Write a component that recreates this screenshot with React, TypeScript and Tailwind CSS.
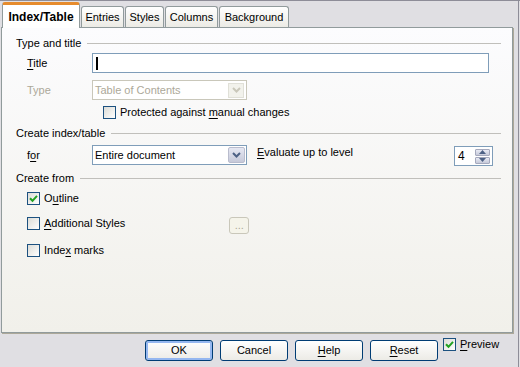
import React from 'react';

function U({ children }: { children: React.ReactNode }) {
  return <span className="underline underline-offset-2">{children}</span>;
}

function Check({ checked = false }: { checked?: boolean }) {
  return (
    <span className="w-[13px] h-[13px] shrink-0 border border-[#1c5180] bg-linear-to-br from-[#dcdcd7] to-white flex items-center justify-center">
      {checked && (
        <svg width="9" height="9" viewBox="0 0 9 9">
          <path d="M1 4.2 L3.5 6.8 L8 1.8" fill="none" stroke="#21a121" strokeWidth="2" />
        </svg>
      )}
    </span>
  );
}

function Legend({ label }: { label: string }) {
  return (
    <div className="flex items-center h-[14px] gap-[6px]">
      <span className="whitespace-nowrap">{label}</span>
      <div className="flex-1 h-px bg-[#c0bfbb] mr-[11px]" />
    </div>
  );
}

function Chevron({ color }: { color: string }) {
  return (
    <svg width="9" height="6" viewBox="0 0 9 6">
      <path d="M1 1 L4.5 4.5 L8 1" fill="none" stroke={color} strokeWidth="2" />
    </svg>
  );
}

function XpButton({ children, isDefault = false }: { children: React.ReactNode; isDefault?: boolean }) {
  return (
    <div
      className={`w-[68px] h-[21px] rounded-[3px] border border-[#003c74] bg-linear-to-b from-white to-[#ecebe6] flex items-center justify-center ${
        isDefault ? 'shadow-[inset_0_0_0_2px_#95b7f0]' : ''
      }`}
    >
      {children}
    </div>
  );
}

export default function App() {
  return (
    <div className="w-[520px] h-[367px] bg-[#e0dfe3] border-t border-[#8e8d98] font-['Liberation_Sans',Arial,sans-serif] text-[11px] text-black overflow-hidden">
      <div className="w-[519px] h-full border-r border-[#8e8d98]">
        {/* Tabs */}
        <div className="flex items-end h-[26px] pl-[2px]">
          <div className="relative z-10 h-[26px] w-[78px] bg-white border-x border-[#919b9c] rounded-t-[3px] border-t-[3px] border-t-[#e68b2c] font-bold text-[12px] flex items-center justify-center -mb-px">
            Index/Table
          </div>
          {[
            ['Entries', 'w-[43px]'],
            ['Styles', 'w-[39px]'],
            ['Columns', 'w-[53px]'],
            ['Background', 'w-[70px]'],
          ].map(([t, w]) => (
            <div
              key={t}
              className={`h-[21px] ${w} ml-[1px] border border-b-0 border-[#919b9c] rounded-t-[3px] bg-linear-to-b from-white to-[#ecebe5] flex items-center justify-center`}
            >
              {t}
            </div>
          ))}
        </div>

        {/* Panel */}
        <div className="ml-[1px] w-[512px] h-[306px] border border-[#919b9c] bg-linear-to-b from-[#fcfcfe] to-[#f1f0ea] shadow-[1px_1px_0_#aca899] pl-[14px] pt-[8px]">
          <Legend label="Type and title" />

          <div className="flex items-center h-[20px] mt-[3px]">
            <span className="w-[76px] pl-[11px]"><U>T</U>itle</span>
            <div className="w-[397px] h-[20px] border border-[#7f9db9] bg-white flex items-center pl-[3px]">
              <div className="w-[2px] h-[13px] bg-black" />
            </div>
          </div>

          <div className="flex items-center h-[20px] mt-[7px]">
            <span className="w-[76px] pl-[11px] text-[#aca899]">Type</span>
            <div className="w-[155px] h-[20px] border border-[#c9c7ba] bg-white flex items-center justify-between pl-[2px] pr-[2px] text-[#aca899]">
              <span>Table of Contents</span>
              <span className="w-[16px] h-[15px] bg-[#f2f2ec] border border-[#e0e0d8] flex items-center justify-center">
                <Chevron color="#c9c7ba" />
              </span>
            </div>
          </div>

          <div className="flex items-center h-[14px] mt-[5px] pl-[87px] gap-[4px]">
            <Check />
            <span>Protected against <U>m</U>anual changes</span>
          </div>

          <div className="mt-[7px]">
            <Legend label="Create index/table" />
          </div>

          <div className="flex items-start h-[20px] mt-[5px]">
            <span className="w-[76px] pl-[11px] h-[20px] flex items-center">f<U>o</U>r</span>
            <div className="w-[155px] h-[20px] border border-[#7f9db9] bg-white flex items-center justify-between pl-[2px] pr-[1px]">
              <span>Entire document</span>
              <span className="w-[17px] h-[16px] rounded-[2px] bg-linear-to-b from-[#e6e8f3] to-[#c6c9d9] border border-[#b9bccd] flex items-center justify-center">
                <Chevron color="#4d6185" />
              </span>
            </div>
            <span className="ml-[10px] -mt-[1px]"><U>E</U>valuate up to level</span>
            <div className="ml-auto mr-[19px] mt-[1px] w-[39px] h-[20px] border border-[#7f9db9] bg-white flex items-center justify-between pl-[3px] pr-[2px]">
              <span className="text-[12px]">4</span>
              <span className="flex flex-col gap-px">
                <span className="w-[15px] h-[7px] rounded-[1px] bg-linear-to-b from-[#e8eaf4] to-[#c6c9d9] border border-[#a5a9bd] flex items-center justify-center">
                  <svg width="7" height="4" viewBox="0 0 7 4"><path d="M0 4 L3.5 0 L7 4Z" fill="#4d6185" /></svg>
                </span>
                <span className="w-[15px] h-[7px] rounded-[1px] bg-linear-to-b from-[#e8eaf4] to-[#c6c9d9] border border-[#a5a9bd] flex items-center justify-center">
                  <svg width="7" height="4" viewBox="0 0 7 4"><path d="M0 0 L3.5 4 L7 0Z" fill="#4d6185" /></svg>
                </span>
              </span>
            </div>
          </div>

          <div className="mt-[6px]">
            <Legend label="Create from" />
          </div>

          <div className="flex items-center h-[14px] mt-[6px] pl-[11px] gap-[4px]">
            <Check checked />
            <span>O<U>u</U>tline</span>
          </div>

          <div className="flex items-start h-[20px] mt-[8px] pl-[11px]">
            <div className="flex items-center gap-[4px] mt-[2px]">
              <Check />
              <span><U>A</U>dditional Styles</span>
            </div>
            <div className="ml-[104px] mt-[4px] w-[20px] h-[17px] border border-[#c9c7ba] rounded-[3px] bg-[#f5f4ea] text-[#aca899] flex items-center justify-center leading-none">
              ...
            </div>
          </div>

          <div className="flex items-center h-[14px] mt-[10px] pl-[11px] gap-[4px]">
            <Check />
            <span>Inde<U>x</U> marks</span>
          </div>
        </div>

        {/* Buttons */}
        <div className="flex items-start pl-[145px] mt-[5px] gap-[7px]">
          <div className="mt-[2px]"><XpButton isDefault>OK</XpButton></div>
          <div className="mt-[2px]"><XpButton>Cancel</XpButton></div>
          <div className="mt-[2px]"><XpButton><U>H</U>elp</XpButton></div>
          <div className="mt-[2px]"><XpButton><U>R</U>eset</XpButton></div>
          <div className="flex items-center h-[13px] gap-[4px] -ml-[2px]">
            <Check checked />
            <span><U>P</U>review</span>
          </div>
        </div>
      </div>
    </div>
  );
}
